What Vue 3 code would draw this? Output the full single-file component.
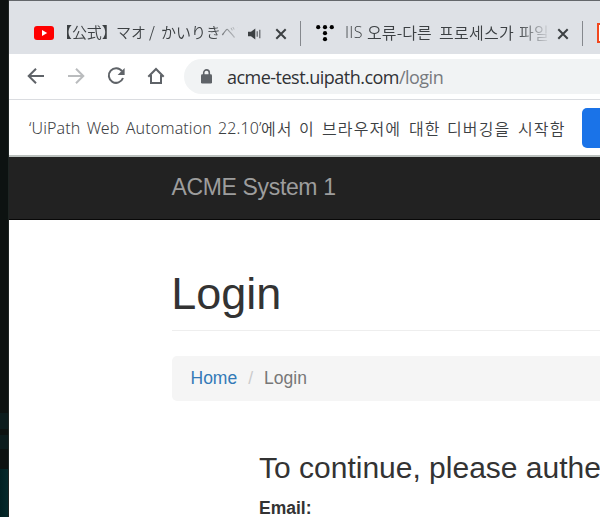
<script setup>
const tabs = [
  { kind: 'video', audio: true },
  { kind: 'dots', audio: false },
]
const dots = [[2.2, 2.2], [9, 2.2], [15.8, 2.2], [9, 8.2], [9, 14.2]]
</script>

<template>
  <div class="screen">
    <div class="desktop"><i class="patch one"></i><i class="patch two"></i><i class="patch glow"></i></div>
    <div class="window">
      <div class="tabs">
        <div v-for="tab in tabs" :key="tab.kind" class="tab" :class="tab.kind">
          <svg v-if="tab.kind === 'video'" class="favicon" width="20" height="14" viewBox="0 0 20 14">
            <rect width="20" height="14" rx="3" fill="#f00" /><path d="M8 4l5.2 3L8 10z" fill="#fff" />
          </svg>
          <svg v-else class="favicon" width="18" height="17" viewBox="0 0 18 17">
            <circle v-for="(d, i) in dots" :key="i" :cx="d[0]" :cy="d[1]" r="2.1" fill="#000" />
          </svg>
          <div v-if="tab.kind === 'video'" class="title jp"><span class="a">【公式】</span><span class="b">マオ</span><span class="c">/</span><span class="d">かいりきベア</span></div>
          <div v-else class="title kr"><span class="latin">IIS</span><span class="e">오류-다른</span><span class="f">프로세스가</span><span class="g">파일을</span></div>
          <svg v-if="tab.audio" class="audio" width="14" height="12" viewBox="0 0 14 12">
            <path d="M0 3.7h3L7.3 0.5v11L3 8.3H0z" fill="#3c4043" />
            <path d="M9.2 3.2v5.6M11.8 1.8v8.4" stroke="#5f6368" stroke-width="1.2" fill="none" />
          </svg>
          <svg class="close" width="12" height="12" viewBox="0 0 12 12"><path d="M1.3 1.3l9.4 9.4M10.7 1.3L1.3 10.7" stroke="#3c4043" stroke-width="2" /></svg>
        </div>
        <i class="nexticon"></i>
      </div>
      <div class="toolbar">
        <svg width="18" height="18" viewBox="0 0 18 18" fill="none" stroke="#5f6368" stroke-width="2"><path d="M17 9H2M9 1.7L1.7 9 9 16.3" /></svg>
        <svg width="18" height="18" viewBox="0 0 18 18" fill="none" stroke="#babcbe" stroke-width="2"><path d="M1 9h15M9 1.7L16.3 9 9 16.3" /></svg>
        <svg width="18" height="18" viewBox="0 0 18 18"><path d="M15 4.2A7.3 7.3 0 1 0 16 11" fill="none" stroke="#5f6368" stroke-width="2" /><path d="M17.6 1v7h-7z" fill="#5f6368" /></svg>
        <svg width="18" height="18" viewBox="0 0 18 18" fill="none" stroke="#5f6368" stroke-width="2"><path d="M1.3 9.7L9 2l7.7 7.7M4 8v8h10V8" /></svg>
        <div class="address">
          <svg width="11" height="15" viewBox="0 0 11 15"><path d="M2.7 6V3.7a2.8 2.8 0 0 1 5.6 0V6" fill="none" stroke="#5f6368" stroke-width="1.6" /><rect y="5.2" width="11" height="9.3" rx="1.3" fill="#5f6368" /></svg>
          <div class="url"><span class="host">acme-test.uipath.com</span><span class="path">/login</span></div>
        </div>
      </div>
      <div class="infobar">
        <div class="notice"><span class="en">‘UiPath Web Automation 22.10’</span><span class="k1">에서</span><span class="k2">이</span><span class="k3">브라우저에</span><span class="k4">대한</span><span class="k5">디버깅을</span><span class="k6">시작함</span></div>
        <div class="action"></div>
      </div>
      <nav class="brandbar"><span>ACME System 1</span></nav>
      <main>
        <h1>Login</h1>
        <div class="breadcrumb"><a>Home</a><i>/</i><span>Login</span></div>
        <section>
          <h3>To continue, please authenticate</h3>
          <label>Email:</label>
        </section>
      </main>
    </div>
  </div>
</template>

<style>
html, body { margin: 0; overflow: hidden; }
</style>
<style scoped>
.screen { width: 600px; height: 517px; display: flex; overflow: hidden; font-family: "Liberation Sans", sans-serif; }
.desktop { box-sizing: border-box; width: 9px; height: 517px; flex: none; background: #0d1211; border-right: 1px solid #1d2422; padding-top: 413px; display: flex; flex-direction: column; }
.patch { display: block; height: 16px; background: #0c1c1d; flex: none; }
.two { margin-top: 6px; height: 14px; }
.glow { margin-top: 20px; height: 48px; background: linear-gradient(90deg, #012022, #05292b); }
.window { width: 591px; flex: none; background: #fff; overflow: hidden; }
.tabs { box-sizing: border-box; height: 54px; background: #dee1e6; border-top: 1px solid #64676b; display: flex; overflow: hidden; }
.tab { box-sizing: border-box; height: 25px; margin-top: 20px; display: flex; align-items: center; border-right: 1px solid #85888d; flex: none; }
.video { width: 292px; padding-left: 25px; }
.dots { width: 282px; padding-left: 15px; }
.favicon { margin-top: -1px; }
.favicon, .audio, .close { flex: none; }
.title { height: 25px; display: flex; overflow: hidden; white-space: nowrap; color: #3c4043; flex: none; }
.jp { margin-left: 3px; width: 181px; font: 350 15px/22px "Noto Sans CJK JP", sans-serif; -webkit-mask-image: linear-gradient(90deg, #000 155px, transparent 185px); mask-image: linear-gradient(90deg, #000 155px, transparent 185px); }
.title span { flex: none; }
.a { width: 59px; letter-spacing: -.1px; }
.b { width: 33px; }
.c { width: 12px; }
.kr { margin-left: 11px; width: 203px; font: 350 16px/22px "Noto Sans CJK KR", sans-serif; letter-spacing: .3px; -webkit-mask-image: linear-gradient(90deg, #000 172px, transparent 206px); mask-image: linear-gradient(90deg, #000 172px, transparent 206px); }
.latin { width: 22px; font-family: "Open Sans", sans-serif; }
.e { width: 72px; letter-spacing: .1px; }
.f { width: 80px; }
.audio { margin-left: 10px; }
.video .close { margin-left: 13px; }
.dots .close { margin-left: 9px; }
.nexticon { box-sizing: border-box; width: 18px; height: 20px; margin: 22px 0 0 14px; border: 2px solid #f2481e; flex: none; background: #fff; }
.toolbar { box-sizing: border-box; height: 46px; border-bottom: 1px solid #dadce0; display: flex; align-items: center; padding: 0 0 1px 18px; gap: 22px; }
.toolbar > svg { flex: none; }
.address { height: 35px; width: 500px; margin-left: -3px; border-radius: 18px; background: #f1f3f4; display: flex; align-items: center; padding-left: 17px; gap: 15px; flex: none; position: relative; top: .5px; }
.url { font: 18px/34px "Open Sans", sans-serif; white-space: nowrap; color: #303134; letter-spacing: -.52px; }
.path { color: #777a7e; }
.infobar { box-sizing: border-box; height: 57px; border-bottom: 2px solid #bbc1be; display: flex; align-items: center; padding-left: 20px; }
.notice { display: flex; width: 553px; flex: none; color: #3c4043; font: 350 16px/26px "Noto Sans CJK KR", sans-serif; letter-spacing: 1.1px; white-space: nowrap; }
.notice span { flex: none; }
.en { width: 232px; font-family: "Noto Sans", sans-serif; font-weight: 300; letter-spacing: .1px; word-spacing: 2px; }
.k1 { width: 38px; }
.k2 { width: 23px; }
.k3 { width: 87px; }
.k4 { width: 38px; }
.k5 { width: 71px; }
.action { width: 40px; height: 40px; border-radius: 5px; background: #1a73e8; flex: none; }
.brandbar { box-sizing: border-box; height: 63px; background: #222; border-bottom: 1px solid #080808; padding-left: 162.5px; color: #9d9d9d; font-size: 23px; letter-spacing: -.35px; line-height: 60px; }
main { padding-left: 163px; }
h1 { box-sizing: border-box; height: 111px; margin: 0; padding-top: 49px; border-bottom: 1px solid #eee; color: #333; font-weight: 400; font-size: 45px; line-height: 50px; text-indent: -.8px; }
.breadcrumb { box-sizing: border-box; height: 45px; margin-top: 25px; padding-left: 18.5px; background: #f5f5f5; border-radius: 5px 0 0 5px; display: flex; font-size: 17.5px; line-height: 44px; }
.breadcrumb a { color: #337ab7; }
.breadcrumb i { color: #ccc; font-style: normal; margin: 0 11px; }
.breadcrumb span { color: #777; }
section { padding: 49px 0 0 87px; color: #333; white-space: nowrap; }
h3 { margin: 0; font-weight: 400; font-size: 30px; line-height: 36px; }
label { display: block; margin-top: 10px; font-size: 17.5px; font-weight: 700; line-height: 25px; }
</style>
